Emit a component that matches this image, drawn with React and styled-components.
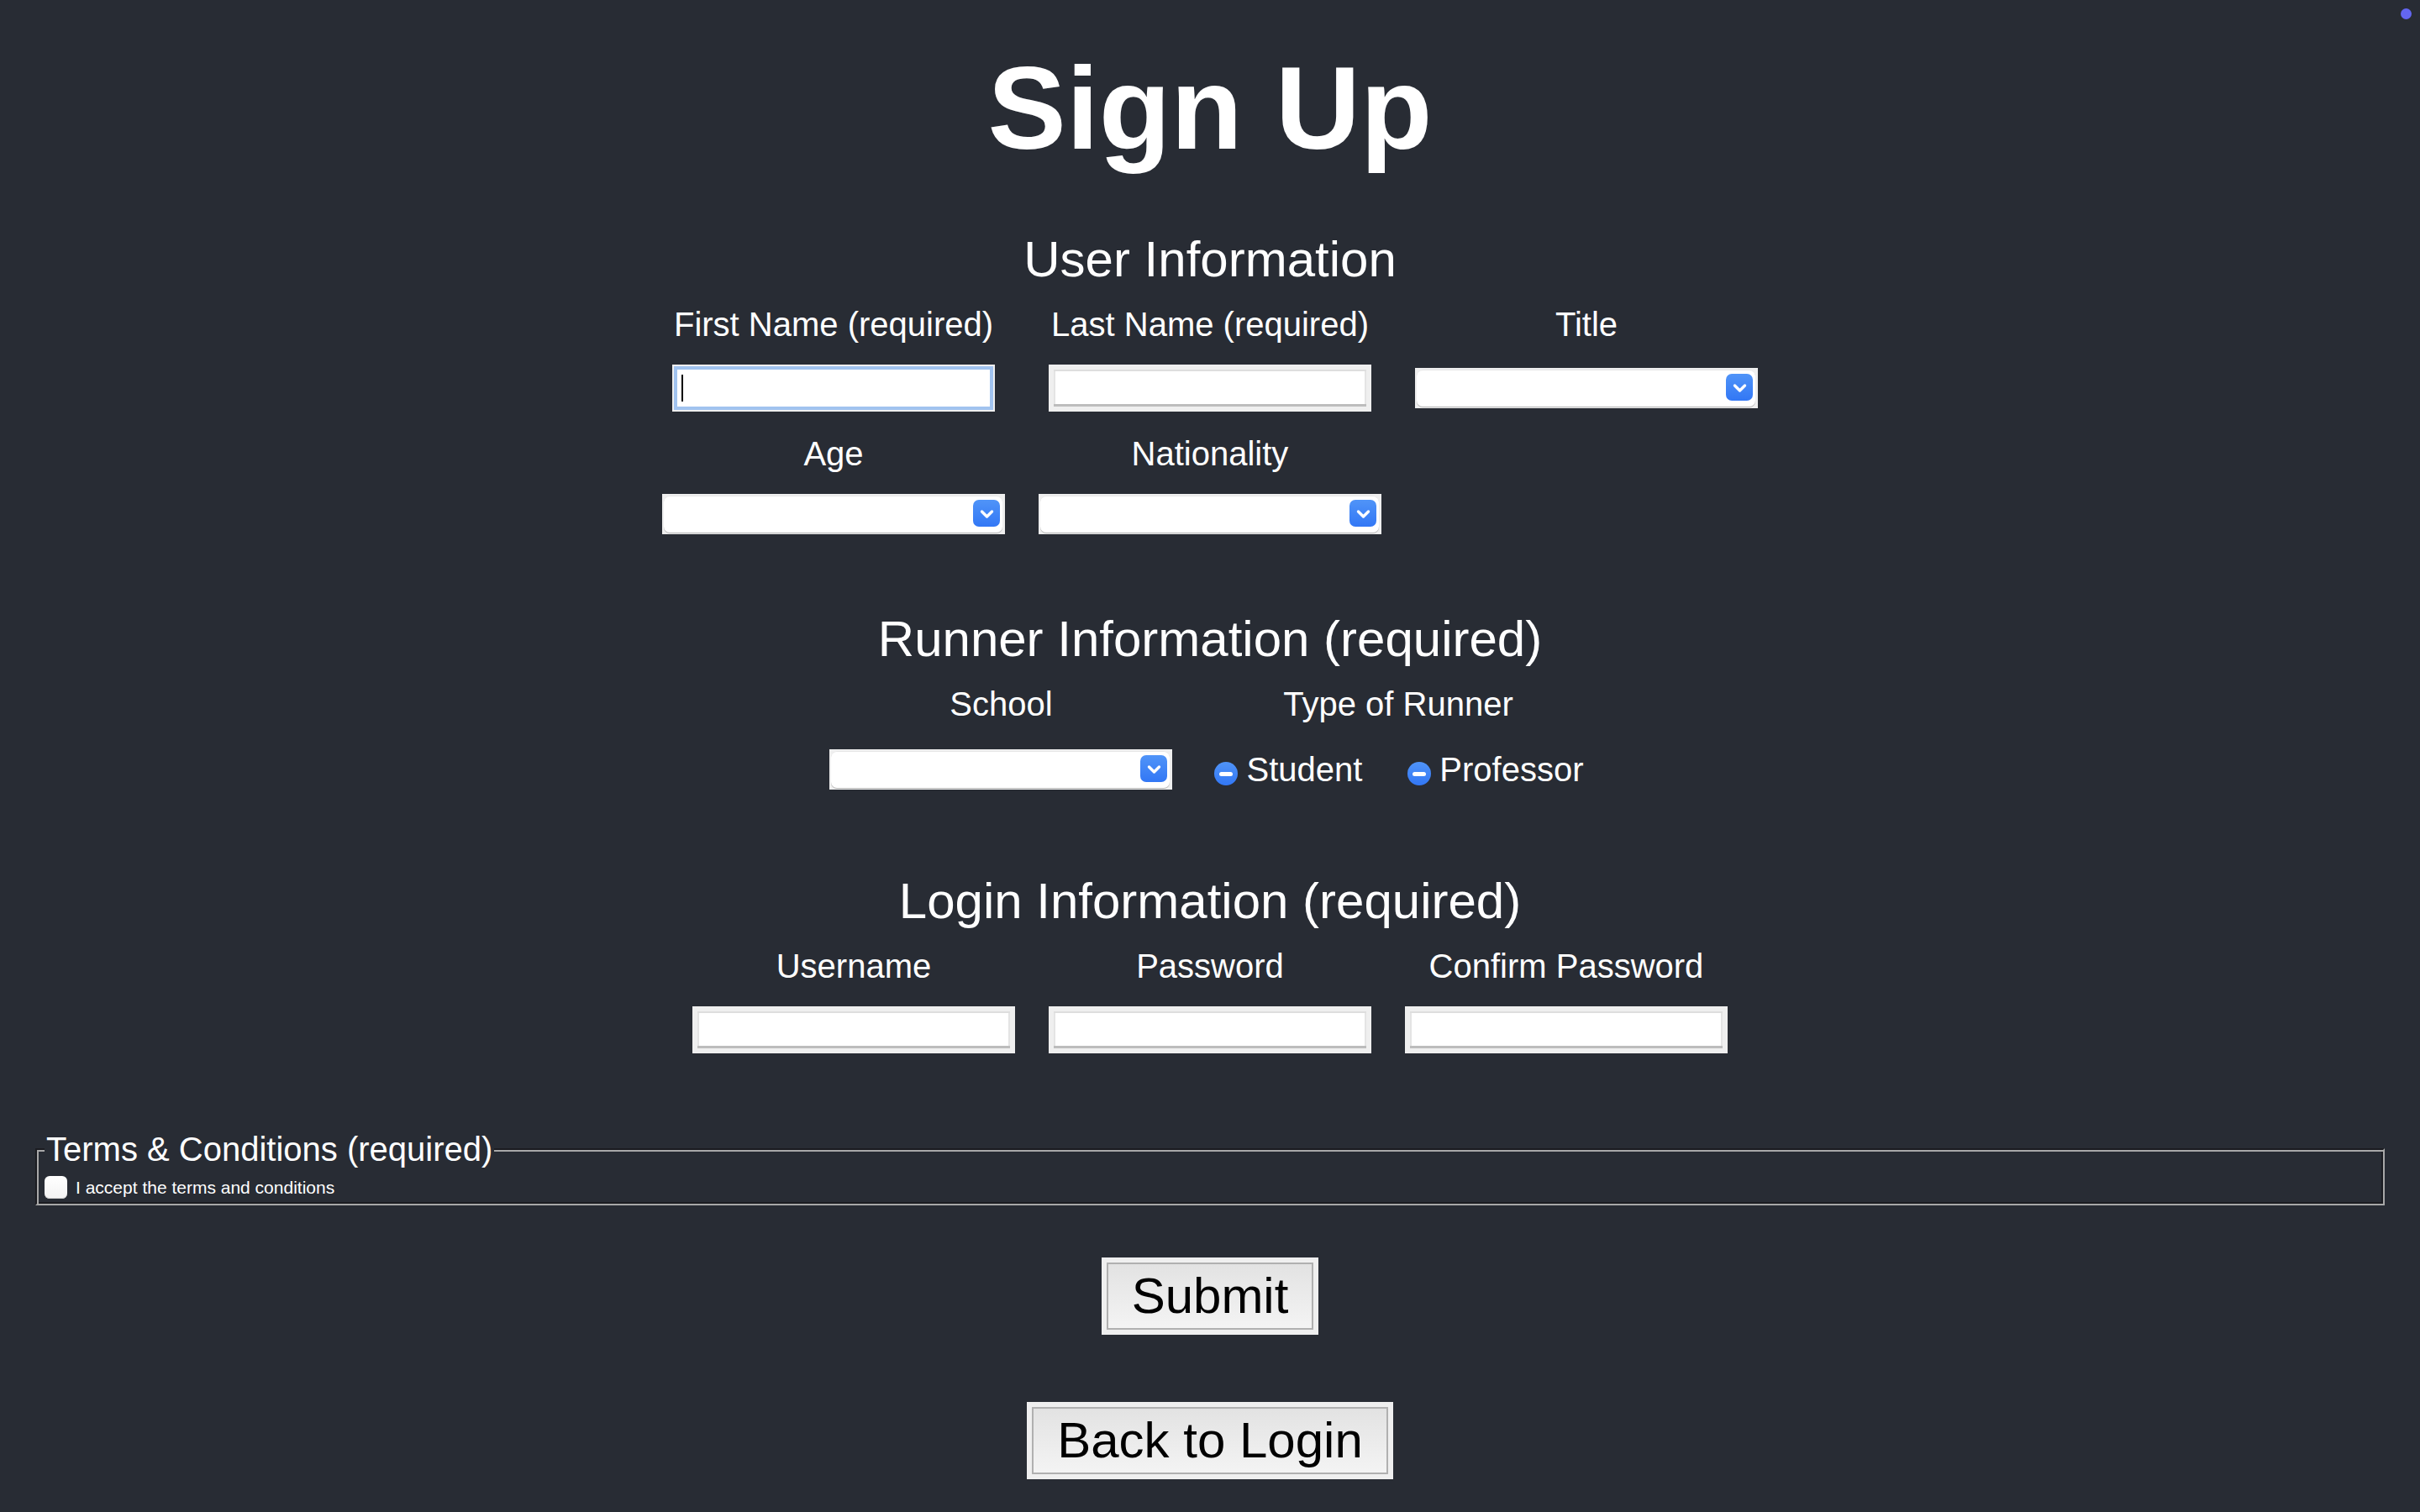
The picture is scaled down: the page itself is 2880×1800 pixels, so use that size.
import styled, { createGlobalStyle } from 'styled-components';

const GlobalStyle = createGlobalStyle`
  html, body {
    margin: 0;
    padding: 0;
    background: #282c34;
  }
  body {
    font-family: "Liberation Sans", Arial, Helvetica, sans-serif;
    color: #fff;
  }
  * { box-sizing: border-box; }
`;

const Page = styled.div`
  position: relative;
  min-height: 1800px;
  display: flex;
  flex-direction: column;
  align-items: center;
`;

const StatusDot = styled.span`
  position: absolute;
  top: 10px;
  right: 10px;
  width: 13px;
  height: 13px;
  border-radius: 50%;
  background: #6366f1;
`;

const Title = styled.h1`
  margin: 59px 0 0;
  font-size: 140px;
  font-weight: bold;
  line-height: 1;
`;

const SectionTitle = styled.h2`
  margin: 0;
  padding-top: ${p => p.$top}px;
  font-size: 60px;
  font-weight: normal;
  line-height: 1;
`;

const FieldGrid = styled.div`
  display: grid;
  grid-template-columns: ${p => p.$columns};
  justify-content: center;
  column-gap: 40px;
  row-gap: 30px;
  margin-top: 27px;
`;

const Field = styled.div`
  display: flex;
  flex-direction: column;
  align-items: center;
`;

const FieldLabel = styled.label`
  font-size: 40px;
  line-height: 1;
  margin-bottom: 28px;
  white-space: nowrap;
`;

const ControlSlot = styled.div`
  flex: 1;
  display: flex;
  align-items: center;
  justify-content: center;
`;

const InputShell = styled.div`
  position: relative;
  display: flex;
`;

const TextInput = styled.input`
  width: 384px;
  height: 56px;
  margin: 0;
  padding: 0 12px;
  font-family: inherit;
  font-size: 26px;
  background: #fff;
  outline: none;
  border-radius: 0;
  border: ${p => (p.$focused ? '2px' : '6px')} solid #efefef;
  box-shadow: ${p =>
    p.$focused
      ? 'inset 0 0 0 4px #a1c3ef'
      : 'inset 0 2px 0 #dedede, inset 0 -3px 0 #bdbdbd, inset 2px 0 0 #e4e4e4, inset -2px 0 0 #e4e4e4'};
`;

const Caret = styled.span`
  position: absolute;
  left: 11px;
  top: 12px;
  width: 2px;
  height: 32px;
  background: #000;
`;

const SelectShell = styled.div`
  position: relative;
  width: 408px;
  height: 48px;
  padding: 2px 3px 2px 2px;
  background: #efefef;
`;

const SelectField = styled.select`
  appearance: none;
  width: 100%;
  height: 100%;
  margin: 0;
  border: none;
  border-radius: 7px;
  background: #fff;
  font-family: inherit;
  font-size: 26px;
  outline: none;
  box-shadow: 0 1px 0 #b5b5b5, inset 0 1px 0 #e6e6e6;
`;

const ArrowBadge = styled.span`
  position: absolute;
  top: 7px;
  right: 6px;
  width: 32px;
  height: 32px;
  border-radius: 7px;
  background: linear-gradient(#5094f8, #3277f5);
  display: flex;
  align-items: center;
  justify-content: center;
  pointer-events: none;
`;

const RadioGroup = styled.div`
  height: 60px;
  display: flex;
  align-items: center;
  gap: 44px;
  padding-right: 8px;
`;

const RadioOption = styled.label`
  display: flex;
  align-items: center;
  gap: 10px;
  padding-left: 10px;
  font-size: 40px;
  line-height: 1;
  white-space: nowrap;
`;

const RadioDot = styled.span`
  position: relative;
  width: 28px;
  height: 28px;
  margin-top: 10px;
  border-radius: 50%;
  background: linear-gradient(#5094f8, #3277f5);

  &::after {
    content: '';
    position: absolute;
    left: 6px;
    top: 11.5px;
    width: 16px;
    height: 5px;
    border-radius: 3px;
    background: #fff;
  }
`;

const Terms = styled.fieldset`
  align-self: stretch;
  margin: 94px 42px 0;
  min-width: 0;
  padding: 12px 9px 6px;
  border: 2px solid;
  border-color: #1b1c21 #a8a8a8 #a8a8a8 #1b1c21;
  box-shadow: inset 2px 2px 0 #a8a8a8, inset -2px -2px 0 #1b1c21;
`;

const TermsLegend = styled.legend`
  padding: 0 2px;
  font-size: 40px;
  line-height: 1;
  background: #282c34;
`;

const CheckRow = styled.label`
  display: flex;
  align-items: center;
  gap: 10px;
  font-size: 21px;
  line-height: 1;
`;

const CheckBox = styled.input`
  appearance: none;
  width: 27px;
  height: 27px;
  margin: 0;
  border-radius: 6px;
  background: linear-gradient(#ffffff, #f3f3f3);
  box-shadow: inset 0 -1px 0 #d0d0d0;
`;

const ActionButton = styled.button`
  margin-top: ${p => p.$top}px;
  padding: 0 30px;
  font-family: inherit;
  font-size: 60px;
  line-height: 80px;
  color: #000;
  border: 6px solid #efefef;
  border-radius: 0;
  background: linear-gradient(#e2e2e2, #f4f4f4);
  box-shadow: inset 0 0 0 2px #b0b0b0;
`;

const Chevron = () => (
  <svg width="32" height="32" viewBox="0 0 32 32">
    <path d="M10.5 14 L16.5 20 L22.5 14" fill="none" stroke="#fff" strokeWidth="3.4" strokeLinecap="round" strokeLinejoin="round" />
  </svg>
);

const Select = () => (
  <SelectShell>
    <SelectField defaultValue="">
      <option value=""></option>
    </SelectField>
    <ArrowBadge><Chevron /></ArrowBadge>
  </SelectShell>
);

const userFields = [
  { label: 'First Name (required)', kind: 'text', focused: true },
  { label: 'Last Name (required)', kind: 'text' },
  { label: 'Title', kind: 'select' },
  { label: 'Age', kind: 'select' },
  { label: 'Nationality', kind: 'select' },
];

const loginFields = [
  { label: 'Username', type: 'text' },
  { label: 'Password', type: 'password' },
  { label: 'Confirm Password', type: 'password' },
];

const App = () => {
  return (
    <Page>
      <GlobalStyle />
      <StatusDot />
      <Title>Sign Up</Title>

      <SectionTitle $top={80}>User Information</SectionTitle>
      <FieldGrid $columns="repeat(3, 408px)">
        {userFields.map(field => (
          <Field key={field.label}>
            <FieldLabel>{field.label}</FieldLabel>
            <ControlSlot>
              {field.kind === 'select' ? (
                <Select />
              ) : (
                <InputShell>
                  <TextInput type="text" $focused={field.focused} />
                  {field.focused && <Caret />}
                </InputShell>
              )}
            </ControlSlot>
          </Field>
        ))}
      </FieldGrid>

      <SectionTitle $top={95}>Runner Information (required)</SectionTitle>
      <FieldGrid $columns="408px auto">
        <Field>
          <FieldLabel>School</FieldLabel>
          <ControlSlot>
            <Select />
          </ControlSlot>
        </Field>
        <Field>
          <FieldLabel>Type of Runner</FieldLabel>
          <ControlSlot>
            <RadioGroup>
              <RadioOption><RadioDot />Student</RadioOption>
              <RadioOption><RadioDot />Professor</RadioOption>
            </RadioGroup>
          </ControlSlot>
        </Field>
      </FieldGrid>

      <SectionTitle $top={97}>Login Information (required)</SectionTitle>
      <FieldGrid $columns="repeat(3, 384px)">
        {loginFields.map(field => (
          <Field key={field.label}>
            <FieldLabel>{field.label}</FieldLabel>
            <ControlSlot>
              <TextInput type={field.type} />
            </ControlSlot>
          </Field>
        ))}
      </FieldGrid>

      <Terms>
        <TermsLegend>Terms &amp; Conditions (required)</TermsLegend>
        <CheckRow>
          <CheckBox type="checkbox" />
          I accept the terms and conditions
        </CheckRow>
      </Terms>

      <ActionButton $top={62}>Submit</ActionButton>
      <ActionButton $top={80}>Back to Login</ActionButton>
    </Page>
  );
};

export default App;
